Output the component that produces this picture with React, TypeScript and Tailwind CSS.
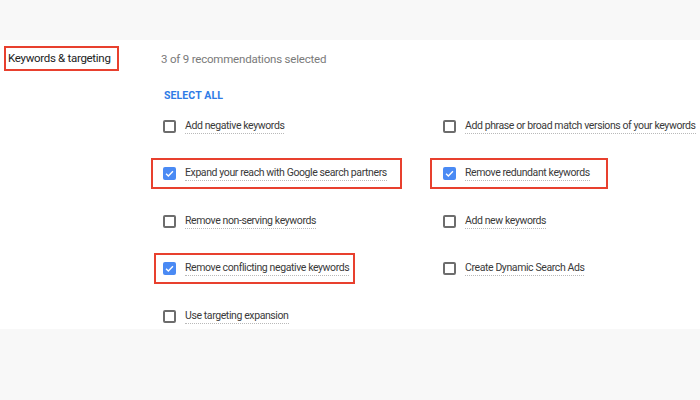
import type { ReactNode } from "react";

type Rec = {
  label: string;
  checked?: boolean;
  // hand-drawn highlight frame around the item
  frame?: "reach" | "redundant" | "conflicting";
};

const left: Rec[] = [
  { label: "Add negative keywords" },
  { label: "Expand your reach with Google search partners", checked: true, frame: "reach" },
  { label: "Remove non-serving keywords" },
  { label: "Remove conflicting negative keywords", checked: true, frame: "conflicting" },
  { label: "Use targeting expansion" },
];

const right: Rec[] = [
  { label: "Add phrase or broad match versions of your keywords" },
  { label: "Remove redundant keywords", checked: true, frame: "redundant" },
  { label: "Add new keywords" },
  { label: "Create Dynamic Search Ads" },
];

function Checkbox({ checked }: { checked?: boolean }) {
  if (checked) {
    return (
      <span className="flex h-[13px] w-[13px] shrink-0 items-center justify-center rounded-[2px] bg-[#4a8af4]">
        <svg viewBox="0 0 24 24" className="h-[11px] w-[11px]" fill="none">
          <path d="M4.5 12.5l5 5L19.5 7" stroke="white" strokeWidth="3" />
        </svg>
      </span>
    );
  }
  return (
    <span className="block h-[13px] w-[13px] shrink-0 rounded-[2px] border-2 border-[#6d6d6d]" />
  );
}

function Frame({ kind, children }: { kind?: Rec["frame"]; children: ReactNode }) {
  if (kind === "reach") {
    return (
      <div className="-ml-[12px] flex h-[31px] items-center border-2 border-[#e8402e] pl-[10px] pr-[13px]">
        {children}
      </div>
    );
  }
  if (kind === "redundant") {
    return (
      <div className="-ml-[13px] flex h-[31px] items-center border-2 border-[#e8402e] pl-[11px] pr-[16px]">
        {children}
      </div>
    );
  }
  if (kind === "conflicting") {
    return (
      <div className="-ml-[9px] flex h-[31px] items-center border-2 border-[#e8402e] pl-[7px] pr-[4px]">
        {children}
      </div>
    );
  }
  return <div className="flex items-center">{children}</div>;
}

function Item({ rec }: { rec: Rec }) {
  return (
    <div className="flex h-[47.5px] items-center">
      <Frame kind={rec.frame}>
        <Checkbox checked={rec.checked} />
        <span className="ml-[9px] whitespace-nowrap border-b border-dotted border-[#b9b9b9] pb-px text-[10.5px] leading-[13px] tracking-[-0.4px] text-[#3a3a3a]">
          {rec.label}
        </span>
      </Frame>
    </div>
  );
}

export default function App() {
  return (
    <div className="h-[400px] w-[700px] overflow-hidden bg-[#f8f8f8] font-['Roboto',sans-serif]">
      <div className="h-[40px]" />
      <div className="flex h-[289px] bg-white">
        <div className="w-[161px] shrink-0 pl-[4px] pt-[6px]">
          <div className="flex h-[25px] w-[115px] items-center whitespace-nowrap border-2 border-[#e8402e] pl-[2px] text-[11.5px] tracking-[-0.3px] text-[#222]">
            Keywords &amp; targeting
          </div>
        </div>
        <div className="flex-1 pt-[11px]">
          <div className="whitespace-nowrap text-[11.5px] leading-[16px] tracking-[-0.2px] text-[#7a7a7a]">
            3 of 9 recommendations selected
          </div>
          <div className="ml-[3px] mt-[24px] h-[11.5px] text-[10.5px] font-bold leading-[10px] tracking-[0.1px] text-[#2f7be6]">
            SELECT ALL
          </div>
          <div className="ml-[2px] grid grid-cols-[280px_1fr]">
            <div className="flex flex-col">
              {left.map((r) => (
                <Item key={r.label} rec={r} />
              ))}
            </div>
            <div className="flex flex-col">
              {right.map((r) => (
                <Item key={r.label} rec={r} />
              ))}
            </div>
          </div>
        </div>
      </div>
    </div>
  );
}
